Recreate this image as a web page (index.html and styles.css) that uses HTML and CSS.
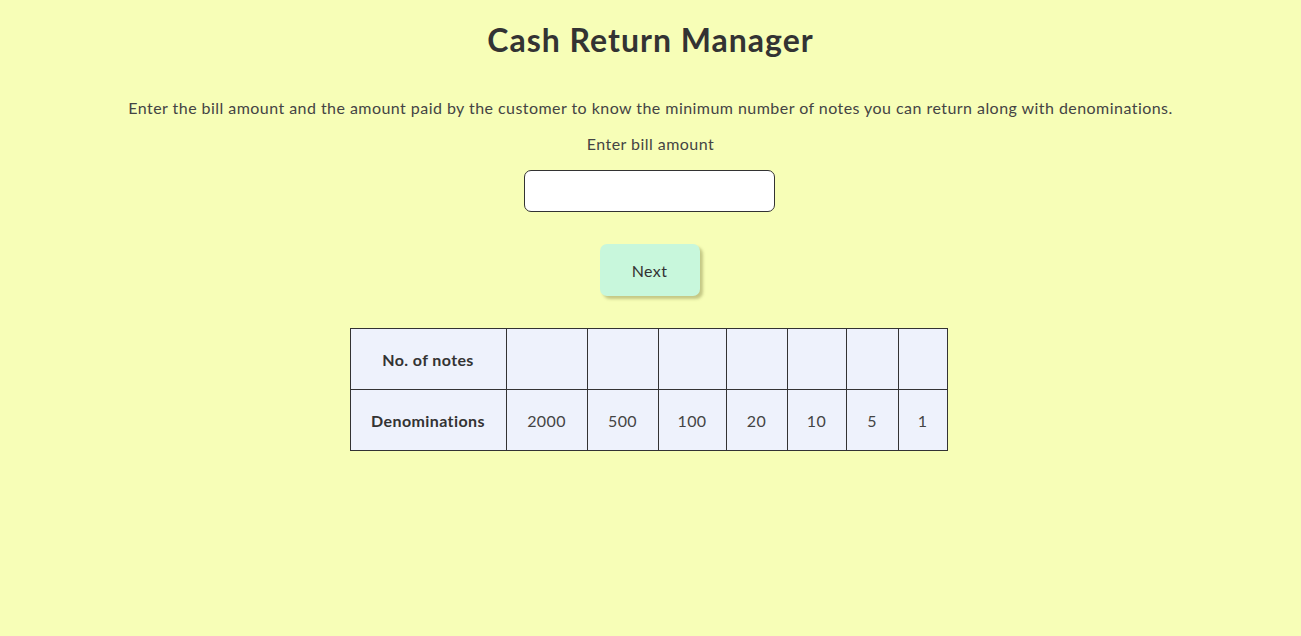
FILE: index.html
```html
<!DOCTYPE html>
<html lang="en">
<head>
<meta charset="utf-8">
<title>Cash Return Manager</title>
<link rel="stylesheet" href="styles.css">
</head>
<body>
<main class="page">
  <h1 class="title">Cash Return Manager</h1>
  <p class="intro">Enter the bill amount and the amount paid by the customer to know the minimum number of notes you can return along with denominations.</p>
  <label class="label" for="bill">Enter bill amount</label>
  <input class="amount" id="bill" type="number">
  <button class="next" type="button">Next</button>
  <table class="notes">
    <tr>
      <th class="c1">No. of notes</th>
      <td class="c2"></td><td class="c3"></td><td class="c4"></td><td class="c5"></td><td class="c6"></td><td class="c7"></td><td class="c8"></td>
    </tr>
    <tr>
      <th>Denominations</th>
      <td>2000</td><td>500</td><td>100</td><td>20</td><td>10</td><td>5</td><td>1</td>
    </tr>
  </table>
</main>
</body>
</html>
```
FILE: styles.css
```css
html, body {
  margin: 0;
  padding: 0;
  background: #f7feb7;
  min-height: 100%;
}
body {
  font-family: Lato, "Noto Sans", sans-serif;
  color: #333333;
  font-size: 16px;
}
.page {
  display: flex;
  flex-direction: column;
  align-items: center;
  padding-top: 20px;
}
.title {
  margin: 0;
  font-size: 32px;
  line-height: 40px;
  font-weight: 700;
  letter-spacing: 1px;
  color: #333333;
}
.intro {
  margin: 38px 0 0;
  line-height: 20px;
  letter-spacing: 0.45px;
  color: #444444;
}
.label {
  margin-top: 16px;
  line-height: 20px;
  letter-spacing: 0.45px;
  color: #444444;
}
.amount {
  margin: 16px 2px 0 0;
  box-sizing: border-box;
  width: 251px;
  height: 42px;
  border: 1px solid #333;
  border-radius: 7px;
  background: #ffffff;
  font: inherit;
  padding: 0 10px;
}
.next {
  margin: 32px 2px 0 0;
  width: 100px;
  height: 52px;
  border: none;
  border-radius: 7px;
  background: #c8f7dc;
  color: #333;
  font: inherit;
  letter-spacing: 0.4px;
  box-shadow: 3px 3px 3px rgba(120, 120, 60, 0.4);
}
.notes {
  margin: 32px 4px 0 0;
  border-collapse: collapse;
  background: #eef2fc;
}
.notes th, .notes td {
  border: 1px solid #333;
  height: 61px;
  box-sizing: border-box;
  padding: 0;
  text-align: center;
  color: #444;
  letter-spacing: 0.4px;
}
.notes th { font-weight: 700; color: #333; }
.c1 { width: 156px; }
.c2 { width: 81px; }
.c3 { width: 71px; }
.c4 { width: 68px; }
.c5 { width: 61px; }
.c6 { width: 59px; }
.c7 { width: 52px; }
.c8 { width: 49px; }
```
